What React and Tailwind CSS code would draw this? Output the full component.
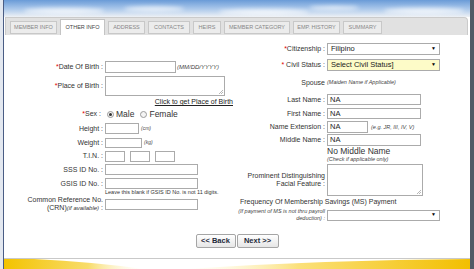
import React from "react";

const tabs = [
  { name: "MEMBER INFO", w: "w-[47px]" },
  { name: "OTHER INFO", w: "w-[45px]", active: true },
  { name: "ADDRESS", w: "w-[37px]" },
  { name: "CONTACTS", w: "w-[42px]" },
  { name: "HEIRS", w: "w-[28px]" },
  { name: "MEMBER CATEGORY", w: "w-[66px]" },
  { name: "EMP. HISTORY", w: "w-[47px]" },
  { name: "SUMMARY", w: "w-[39px]" },
];

const Req = () => <span className="text-[#e00000]">*</span>;

const Box = ({ className, children }) => (
  <div className={`border border-[#ababab] bg-white flex items-center px-[2px] text-[7.5px] text-[#222] ${className}`}>
    {children}
  </div>
);

const Select = ({ className, children }) => (
  <div className={`border border-[#ababab] flex items-center justify-between px-[3px] text-[7.5px] text-[#222] ${className}`}>
    <span>{children}</span>
    <span className="text-[5px] text-black">▼</span>
  </div>
);

const Grip = () => (
  <svg className="absolute right-[1px] bottom-[1px]" width="5" height="5" viewBox="0 0 5 5">
    <path d="M5 1 L1 5 M5 3 L3 5" stroke="#999" strokeWidth="0.7" />
  </svg>
);

const Radio = ({ checked }) => (
  <span className="w-[7px] h-[7px] rounded-full border border-[#9a9a9a] bg-[#f4f4f4] flex items-center justify-center">
    {checked && <span className="w-[3px] h-[3px] rounded-full bg-[#333]" />}
  </span>
);

const Note = ({ children, className = "" }) => (
  <span className={`italic text-[5.5px] text-[#444] ${className}`}>{children}</span>
);

function LRow({ label, children, className = "" }) {
  return (
    <div className={`flex items-center ${className}`}>
      <div className="w-[99px] text-right text-[7px] text-[#333] leading-[8px]">{label}</div>
      <div className="ml-[2px] flex items-center gap-[2px]">{children}</div>
    </div>
  );
}

function RRow({ label, children, className = "" }) {
  return (
    <div className={`flex items-center ${className}`}>
      <div className="w-[91px] text-right text-[7px] text-[#333] leading-[8px]">{label}</div>
      <div className="ml-[2px] flex items-center gap-[3px]">{children}</div>
    </div>
  );
}

export default function App() {
  return (
    <div className="w-[474px] h-[269px] flex bg-white overflow-hidden font-['Liberation_Sans',Arial,sans-serif]">
      <div className="w-[4px] h-full bg-[#e3e8f0] border-r border-[#4a5d85]" />

      <div className="w-[466px] h-full flex flex-col">
        {/* banner */}
        <div className="h-[17px] relative bg-gradient-to-b from-[#6a9bd7] via-[#a8c6ea] to-[#eef1f5]">
          <svg className="absolute inset-0" width="466" height="17" viewBox="0 0 466 17">
            <defs>
              <filter id="blur" x="-20%" y="-50%" width="140%" height="200%">
                <feGaussianBlur stdDeviation="2" />
              </filter>
            </defs>
            <g fill="#ffffff" opacity="0.75" filter="url(#blur)">
              <ellipse cx="60" cy="11" rx="40" ry="3" />
              <ellipse cx="150" cy="9" rx="30" ry="2.5" />
              <ellipse cx="260" cy="12" rx="45" ry="3" />
              <ellipse cx="330" cy="8" rx="25" ry="2" />
              <ellipse cx="420" cy="11" rx="40" ry="3" />
            </g>
          </svg>
        </div>

        {/* tab bar */}
        <div className="h-[18px] ml-[1px] w-[463px] bg-[#e1e1e1] border-t border-x border-[#cbcbcb] rounded-tr-[4px] flex items-end gap-[3px] pl-[4px]">
          {tabs.map((t) =>
            t.active ? (
              <div
                key={t.name}
                className={`${t.w} h-[16px] bg-white border-t border-x border-[#c4c4c4] flex items-center justify-center text-[5.5px] text-[#444]`}
              >
                {t.name}
              </div>
            ) : (
              <div
                key={t.name}
                className={`${t.w} h-[13px] mb-[1px] bg-[#ececec] border border-[#c8c8c8] flex items-center justify-center text-[5.5px] text-[#888]`}
              >
                {t.name}
              </div>
            )
          )}
        </div>

        {/* form */}
        <div className="h-[190px] flex">
          <div className="w-[230px] pt-[26px] flex flex-col">
            <LRow className="h-[12px]" label={<><Req />Date Of Birth :</>}>
              <Box className="w-[71px] h-[12px]" />
              <Note className="text-[6px] -ml-[1px]">(MM/DD/YYYY)</Note>
            </LRow>
            <div className="flex items-start mt-[3px]">
              <div className="w-[99px] text-right text-[7px] text-[#333] pt-[5px]">
                <Req />Place of Birth :
              </div>
              <div className="ml-[2px] relative w-[120px] h-[20px] border border-[#ababab] bg-white">
                <Grip />
              </div>
            </div>
            <div className="mt-[2px] h-[8px] pr-[1px] text-right text-[7px] text-[#222] underline leading-[8px]">
              Click to get Place of Birth
            </div>
            <div className="flex items-center mt-[3px] h-[10px]">
              <div className="w-[97px] text-right text-[7px] text-[#333]">
                <Req />Sex :
              </div>
              <div className="ml-[6px] flex items-center gap-[2px] text-[8.5px] text-[#333]">
                <Radio checked />
                <span>Male</span>
                <span className="w-[2px]" />
                <Radio />
                <span>Female</span>
              </div>
            </div>
            <LRow className="mt-[4px] h-[11px]" label="Height :">
              <Box className="w-[34px] h-[11px]" />
              <Note className="text-[5px]">(cm)</Note>
            </LRow>
            <LRow className="mt-[4px] h-[10px]" label="Weight :">
              <Box className="w-[37px] h-[10px]" />
              <Note className="text-[5px]">(kg)</Note>
            </LRow>
            <div className="flex items-center mt-[3px] h-[11px]">
              <div className="w-[99px] text-right text-[7px] text-[#333]">T.I.N. :</div>
              <div className="ml-[2px] flex items-center gap-[5px]">
                <Box className="w-[20px] h-[11px]" />
                <Box className="w-[20px] h-[11px]" />
                <Box className="w-[20px] h-[11px]" />
              </div>
            </div>
            <LRow className="mt-[2px] h-[11px]" label="SSS ID No. :">
              <Box className="w-[93px] h-[11px]" />
            </LRow>
            <LRow className="mt-[3px] h-[11px]" label="GSIS ID No. :">
              <Box className="w-[93px] h-[11px]" />
            </LRow>
            <div className="ml-[101px] h-[6px] leading-[6px] text-[5.5px] text-[#333]">
              Leave this blank if GSIS ID No. is not 11 digits.
            </div>
            <LRow
              className="mt-[1px]"
              label={
                <>
                  Common Reference No.
                  <br />
                  (CRN)<span className="italic text-[6px]">(if available)</span> :
                </>
              }
            >
              <Box className="w-[93px] h-[11px]" />
            </LRow>
          </div>

          <div className="w-[236px] pt-[8px] flex flex-col">
            <RRow className="h-[12px]" label={<><Req />Citizenship :</>}>
              <Select className="w-[113px] h-[12px] bg-white">Filipino</Select>
            </RRow>
            <RRow className="mt-[4px] h-[12px]" label={<><Req /> Civil Status :</>}>
              <Select className="w-[113px] h-[12px] bg-[#fdfbc8]">Select Civil Status]</Select>
            </RRow>
            <RRow className="mt-[7px] h-[9px]" label="Spouse">
              <Note>(Maiden Name if Applicable)</Note>
            </RRow>
            <RRow className="mt-[7px] h-[11px]" label="Last Name :">
              <Box className="w-[94px] h-[11px]">NA</Box>
            </RRow>
            <RRow className="mt-[3px] h-[11px]" label="First Name :">
              <Box className="w-[94px] h-[11px]">NA</Box>
            </RRow>
            <RRow className="mt-[2px] h-[12px]" label="Name Extension :">
              <Box className="w-[41px] h-[12px]">NA</Box>
              <Note>(e.g. JR, III, IV, V)</Note>
            </RRow>
            <RRow className="mt-[1px] h-[12px]" label="Middle Name :">
              <Box className="w-[94px] h-[12px]">NA</Box>
            </RRow>
            <div className="ml-[93px] mt-[1px] flex flex-col">
              <span className="text-[8.5px] leading-[9px] text-[#333]">No Middle Name</span>
              <Note className="leading-[6px]">(Check if applicable only)</Note>
            </div>
            <RRow
              className="mt-[2px] h-[32px]"
              label={
                <>
                  Prominent Distinguishing
                  <br />
                  Facial Feature :
                </>
              }
            >
              <div className="relative w-[96px] h-[32px] border border-[#ababab] bg-white">
                <Grip />
              </div>
            </RRow>
            <div className="mt-[2px] h-[8px] pl-[6px] text-[7px] leading-[8px] text-[#333]">
              Frequency Of Membership Savings (MS) Payment
            </div>
            <div className="flex items-center mt-[2px]">
              <div className="w-[91px] text-right italic text-[5.5px] leading-[7px] text-[#444]">
                (If payment of MS is not thru payroll
                <br />
                deduction) :
              </div>
              <div className="ml-[2px]">
                <Select className="w-[113px] h-[11px] bg-white"></Select>
              </div>
            </div>
          </div>
        </div>

        {/* buttons */}
        <div className="mt-[9px] h-[14px] flex justify-center gap-[1px]">
          <button className="w-[40px] h-[14px] border border-[#a5a5a5] rounded-[2px] bg-gradient-to-b from-white to-[#e6e6e6] text-[7.5px] font-bold text-[#1f2a3a]">
            &lt;&lt; Back
          </button>
          <button className="w-[42px] h-[14px] border border-[#a5a5a5] rounded-[2px] bg-gradient-to-b from-white to-[#e6e6e6] text-[7.5px] font-bold text-[#1f2a3a]">
            Next &gt;&gt;
          </button>
        </div>

        <div className="h-[10px]" />
        <div className="h-[1px] bg-[#c9c9c9]" />
        <svg width="466" height="10" viewBox="0 0 466 10" className="block">
          <defs>
            <linearGradient id="lg" x1="0" y1="0" x2="1" y2="0">
              <stop offset="0" stopColor="#f3c300" />
              <stop offset="0.6" stopColor="#f8dc6a" />
              <stop offset="1" stopColor="#fff8e0" stopOpacity="0" />
            </linearGradient>
            <linearGradient id="rg" x1="0" y1="0" x2="1" y2="0">
              <stop offset="0" stopColor="#fff6d0" stopOpacity="0" />
              <stop offset="0.4" stopColor="#fbe07a" />
              <stop offset="1" stopColor="#f2bf00" />
            </linearGradient>
          </defs>
          <path d="M0 0 L30 0 Q90 3 140 10 L0 10 Z" fill="url(#lg)" />
          <path d="M180 10 Q320 1 466 0 L466 10 Z" fill="url(#rg)" />
        </svg>
      </div>

      <div className="w-[4px] h-full bg-[#525a66]" />
    </div>
  );
}
